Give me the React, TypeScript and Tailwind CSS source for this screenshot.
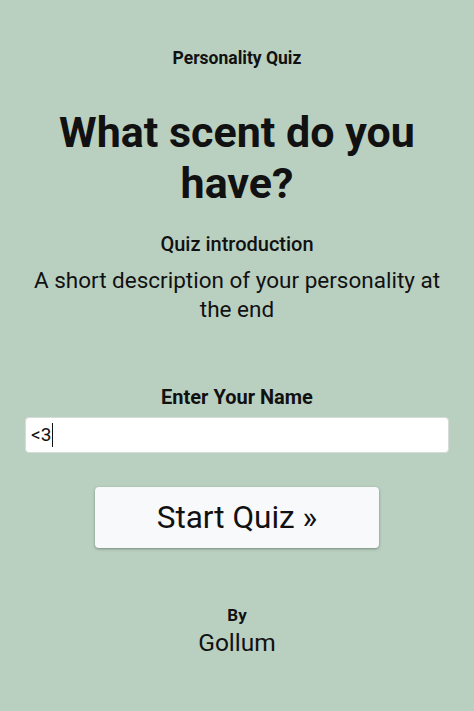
import React from "react";

export default function App() {
  return (
    <div
      className="min-h-[711px] w-full bg-[#b9d0c1] text-[#111] flex flex-col items-center"
      style={{ fontFamily: "Roboto, 'Noto Sans', sans-serif" }}
    >
      <div className="mt-[46px] text-[17.5px] font-bold leading-[24px]">Personality Quiz</div>
      <h1 className="mt-[37px] text-[43px] font-bold leading-[51px] text-center px-[40px]">
        What scent do you have?
      </h1>
      <div className="mt-[23px] text-[20px] font-medium leading-[24px]">Quiz introduction</div>
      <p className="mt-[10px] text-[22.5px] leading-[29px] text-center px-[24px]">
        A short description of your personality at the end
      </p>
      <div className="mt-[61px] text-[20px] font-bold leading-[24px]">Enter Your Name</div>
      <div className="mt-[8px] w-[424px] h-[36px] bg-white rounded-[4px] border border-[#d6dcd8] flex items-center px-[5px] text-[19px]">
        <span>&lt;3</span>
        <span className="w-[1px] h-[24px] bg-[#111] ml-[1px]" />
      </div>
      <button className="mt-[34px] w-[284px] h-[61px] bg-[#f8f9fa] rounded-[4px] shadow-[0_1px_3px_rgba(0,0,0,0.35)] text-[31.5px] leading-none text-[#111]">
        Start Quiz »
      </button>
      <div className="mt-[55px] text-[17px] font-bold leading-[24px]">By</div>
      <div className="mt-[1px] text-[24.5px] leading-[30px]">Gollum</div>
    </div>
  );
}
